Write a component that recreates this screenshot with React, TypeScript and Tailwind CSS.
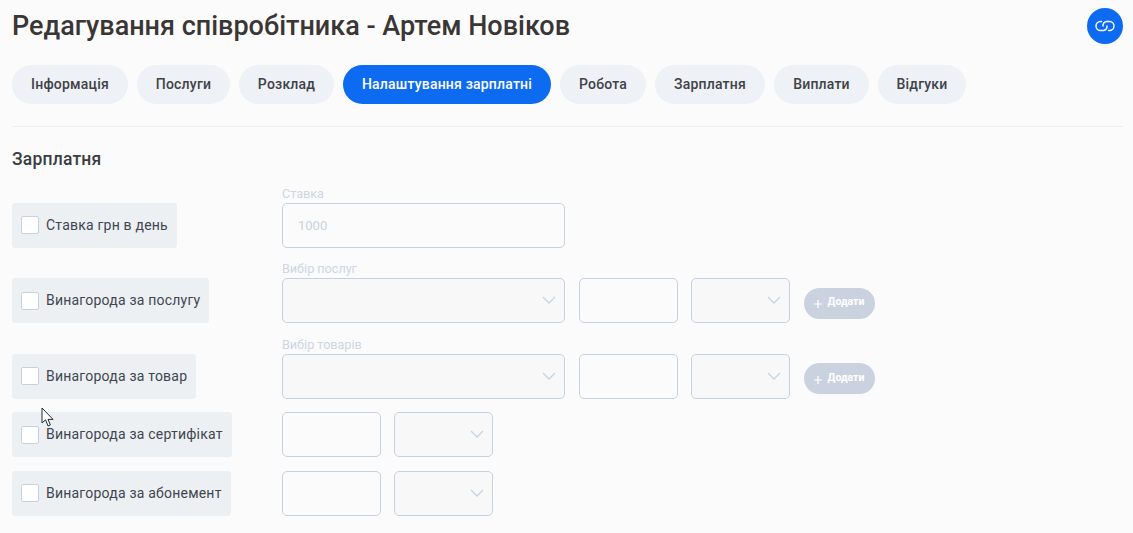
import React from 'react';

const tabs = [
  { name: 'Інформація', width: 'w-[116px]' },
  { name: 'Послуги', width: 'w-[93px]' },
  { name: 'Розклад', width: 'w-[95px]' },
  { name: 'Налаштування зарплатні', width: 'w-[208px]' },
  { name: 'Робота', width: 'w-[86px]' },
  { name: 'Зарплатня', width: 'w-[110px]' },
  { name: 'Виплати', width: 'w-[95px]' },
  { name: 'Відгуки', width: 'w-[88px]' },
];

const Chevron = () => (
  <svg width="14" height="8" viewBox="0 0 14 8" fill="none" stroke="#c9d4e3" strokeWidth="1.3" className="absolute right-[8px] top-[17px]">
    <path d="M1 1l6 6 6-6" />
  </svg>
);

const Select = ({ width }: { width: string }) => (
  <div className={`relative h-[45px] rounded-[5px] border border-[#c5d1e2] bg-[#f8f8f9] ${width}`}>
    <Chevron />
  </div>
);

const Amount = () => <div className="h-[45px] w-[99px] rounded-[5px] border border-[#c5d1e2] bg-[#fbfbfb]" />;

const FieldLabel = ({ children }: { children: React.ReactNode }) => (
  <div className="h-[17px] text-[12.6px] leading-[15px] text-[#cdd6e4]">{children}</div>
);

const CheckLabel = ({ text }: { text: string }) => (
  <div className="flex h-[45px] items-center rounded-[3px] bg-[#edf0f3] pl-[9px] pr-[9px]">
    <span className="mr-[7px] h-[18px] w-[18px] rounded-[2px] border border-[#c5d1e2] bg-white" />
    <span className="text-[14px] tracking-[0.21px] text-[#3f4650]">{text}</span>
  </div>
);

const AddButton = () => (
  <button className="ml-[14px] mt-[22px] flex h-[31px] w-[71px] items-center justify-center rounded-full bg-[#cbd2df] pr-[2px] text-[10.5px] font-bold text-white">
    <svg width="10" height="10" viewBox="0 0 10 10" stroke="white" strokeWidth="1.2" className="mr-[5px] mt-[2px]">
      <path d="M5 1v8M1 5h8" />
    </svg>
    <span className="mb-[2px]">Додати</span>
  </button>
);

const Row = ({ text, children }: { text: string; children: React.ReactNode }) => (
  <div className="flex items-end">
    <div className="flex w-[270px] shrink-0">
      <CheckLabel text={text} />
    </div>
    {children}
  </div>
);

const ServiceRow = ({ text, label }: { text: string; label: string }) => (
  <Row text={text}>
    <div>
      <FieldLabel>{label}</FieldLabel>
      <Select width="w-[283px]" />
    </div>
    <div className="ml-[14px]">
      <Amount />
    </div>
    <div className="ml-[13px]">
      <Select width="w-[99px]" />
    </div>
    <div className="self-center">
      <AddButton />
    </div>
  </Row>
);

const AmountRow = ({ text }: { text: string }) => (
  <Row text={text}>
    <Amount />
    <div className="ml-[13px]">
      <Select width="w-[99px]" />
    </div>
  </Row>
);

export default function App() {
  return (
    <div className="relative h-[533px] overflow-hidden bg-[#fbfbfb] pl-[12px] pr-[10px] font-['Roboto',sans-serif]">
      {/* Шапка */}
      <div className="flex items-start justify-between pt-[8px]">
        <h1 className="mt-[2px] text-[27px] font-medium leading-[32px] text-[#3a3635]">Редагування співробітника - Артем Новіков</h1>
        <button className="flex h-[36px] w-[36px] items-center justify-center rounded-full bg-[#0d6bf2]">
          <svg width="20" height="14" viewBox="0 0 20 14" fill="none" stroke="white" strokeWidth="1.4" strokeLinecap="round">
            <path d="M6.5 2.5h-1a4.5 4.5 0 0 0 0 9h3a4 4 0 0 0 3.5-4.5" />
            <path d="M13.5 11.5h1a4.5 4.5 0 0 0 0-9h-3A4 4 0 0 0 8 7" />
          </svg>
        </button>
      </div>

      {/* Вкладки */}
      <div className="mt-[21px] flex gap-[9px]">
        {tabs.map((tab) => (
          <div
            key={tab.name}
            className={
              tab.name === 'Налаштування зарплатні'
                ? `flex h-[39px] items-center justify-center rounded-full bg-[#0d6bf2] text-[14px] font-medium tracking-[0.2px] text-white ${tab.width}`
                : `flex h-[39px] items-center justify-center rounded-full bg-[#eef1f5] text-[14px] font-medium tracking-[0.2px] text-[#3f4248] ${tab.width}`
            }
          >
            {tab.name}
          </div>
        ))}
      </div>

      <div className="mt-[22px] h-px bg-[#eeeff1]" />

      <h2 className="mt-[21px] text-[17.5px] font-medium leading-[22px] tracking-[0.2px] text-[#3a3d42]">Зарплатня</h2>

      <div className="mt-[15.75px] flex flex-col gap-[13.5px]">
        <Row text="Ставка грн в день">
          <div>
            <FieldLabel>Ставка</FieldLabel>
            <div className="flex h-[45px] w-[283px] items-center rounded-[5px] border border-[#c5d1e2] pl-[15px] text-[13px] text-[#c9d3e2]">1000</div>
          </div>
        </Row>
        <ServiceRow text="Винагорода за послугу" label="Вибір послуг" />
        <ServiceRow text="Винагорода за товар" label="Вибір товарів" />
        <AmountRow text="Винагорода за сертифікат" />
        <AmountRow text="Винагорода за абонемент" />
      </div>

      {/* Курсор миші */}
      <svg width="14" height="22" viewBox="0 0 14 22" className="absolute left-[41px] top-[407px]">
        <path d="M1 1v15l3.6-3.2L7 19l2.4-1-2.4-5.6h5z" fill="white" stroke="#222b3a" strokeWidth="1" />
      </svg>
    </div>
  );
}
